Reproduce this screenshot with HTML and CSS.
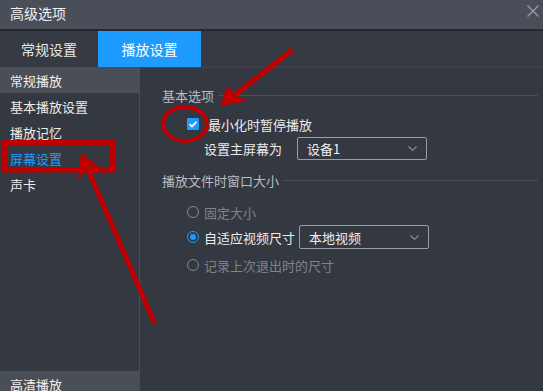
FILE: index.html
```html
<!DOCTYPE html>
<html lang="zh-CN">
<head>
    <meta charset="UTF-8">
    <meta name="viewport" content="width=device-width, initial-scale=1.0">
    <title>高级选项</title>
    <link rel="stylesheet" href="styles.css">
</head>
<body>
    <div class="window">
        <div class="titlebar">
            <span class="title">高级选项</span>
            <svg class="close" width="12" height="12" viewBox="0 0 12 12">
                <path d="M0.5 0.5 L11.5 11.5 M11.5 0.5 L0.5 11.5" stroke="#9a9da3" stroke-width="1.3" fill="none"/>
            </svg>
        </div>

        <div class="tabs">
            <div class="tab">常规设置</div>
            <div class="tab active">播放设置</div>
        </div>

        <div class="main">
            <div class="sidebar">
                <div class="side-head">常规播放</div>
                <div class="side-item">基本播放设置</div>
                <div class="side-item">播放记忆</div>
                <div class="side-item selected">屏幕设置</div>
                <div class="side-item">声卡</div>
                <div class="side-head bottom">高清播放</div>
            </div>

            <div class="content">
                <div class="group-title"><span>基本选项</span><i class="rule"></i></div>

                <div class="row check-row">
                    <span class="checkbox">
                        <svg width="12" height="12" viewBox="0 0 12 12">
                            <path d="M2.6 6.2 L5 8.5 L9.4 3.8" stroke="#fff" stroke-width="1.7" fill="none"/>
                        </svg>
                    </span>
                    <span class="label">最小化时暂停播放</span>
                </div>

                <div class="row select-row">
                    <span class="label">设置主屏幕为</span>
                    <div class="select screen-select">
                        <span>设备1</span>
                        <svg class="chevron" width="9" height="5" viewBox="0 0 9 5">
                            <path d="M0.5 0.5 L4.5 4.3 L8.5 0.5" stroke="#8f9298" stroke-width="1.1" fill="none"/>
                        </svg>
                    </div>
                </div>

                <div class="group-title second"><span>播放文件时窗口大小</span><i class="rule"></i></div>

                <div class="row radio-row first">
                    <span class="radio"></span>
                    <span class="label disabled">固定大小</span>
                </div>
                <div class="row radio-row tall">
                    <span class="radio on"></span>
                    <span class="label">自适应视频尺寸</span>
                    <div class="select video-select">
                        <span>本地视频</span>
                        <svg class="chevron" width="9" height="5" viewBox="0 0 9 5">
                            <path d="M0.5 0.5 L4.5 4.3 L8.5 0.5" stroke="#8f9298" stroke-width="1.1" fill="none"/>
                        </svg>
                    </div>
                </div>
                <div class="row radio-row last">
                    <span class="radio"></span>
                    <span class="label disabled">记录上次退出时的尺寸</span>
                </div>
            </div>
        </div>

        <!-- красные пометки поверх скриншота -->
        <svg class="marks" width="543" height="391" viewBox="0 0 543 391">
            <g stroke="#c00000" fill="none" stroke-linecap="round">
                <line x1="291" y1="51" x2="232" y2="97" stroke-width="5"/>
                <ellipse cx="185" cy="124" rx="22" ry="17" stroke-width="4"/>
                <rect x="4.5" y="142.5" width="108" height="27.5" stroke-width="5" stroke-linecap="butt"/>
                <line x1="154" y1="322" x2="89" y2="172" stroke-width="5"/>
            </g>
            <g fill="#c00000">
                <polygon points="220,106 227,86 235,95 247,101"/>
                <polygon points="81,153 78,180 89,166 102,169"/>
            </g>
        </svg>
    </div>
</body>
</html>
```

FILE: styles.css
```css
* {
    box-sizing: border-box;
}
body {
    margin: 0;
    background: #343840;
    font-family: "Noto Sans CJK SC", "Noto Sans", sans-serif;
    font-size: 13px;
    color: #e8e8e8;
}
.window {
    position: relative;
    width: 543px;
    height: 391px;
    overflow: hidden;
    background: #343840;
}
.titlebar {
    height: 29px;
    background: #4a4e58;
    display: flex;
    align-items: center;
    justify-content: space-between;
    padding: 0 4px 0 10px;
}
.title {
    font-size: 14px;
    color: #f0f0f0;
    line-height: 1;
    margin-top: -3px;
}
.close {
    margin-top: -8px;
}
.tabs {
    height: 38px;
    border-top: 2px solid #26282d;
    background: #363a42;
    display: flex;
}
.tab {
    width: 98px;
    display: flex;
    align-items: center;
    justify-content: center;
    font-size: 14px;
    color: #e8e8e8;
}
.tab.active {
    width: 103px;
    background: #1e9bff;
    color: #fff;
}
.main {
    display: flex;
    height: 330px;
}
.sidebar {
    width: 140px;
    border-right: 1px solid #4a4e56;
    display: flex;
    flex-direction: column;
}
.side-head {
    height: 26px;
    background: #4a4e57;
    padding-left: 10px;
    display: flex;
    align-items: center;
    color: #f0f0f0;
}
.side-head.bottom {
    margin-top: auto;
}
.side-item {
    height: 26px;
    padding-left: 10px;
    display: flex;
    align-items: center;
    color: #ececec;
}
.side-item.selected {
    color: #1e9bff;
}
.content {
    flex: 1;
    border-top: 1px solid #3f434b;
    padding: 17px 5px 0 22px;
}
.group-title {
    height: 20px;
    display: flex;
    align-items: center;
    gap: 4px;
    color: #b9bcc2;
}
.group-title.second {
    margin-top: 10px;
}
.rule {
    flex: 1;
    height: 1px;
    background: #4a4e56;
}
.row {
    display: flex;
    align-items: center;
    height: 20px;
    padding-left: 25px;
}
.check-row {
    margin-top: 9px;
}
.select-row {
    height: 23px;
    margin-top: 3px;
    padding-left: 42px;
}
.radio-row.first {
    margin-top: 12px;
}
.radio-row.tall {
    height: 24px;
    margin-top: 3px;
}
.radio-row.last {
    margin-top: 6px;
}
.checkbox {
    width: 12px;
    height: 12px;
    background: #1e9bff;
    border-radius: 1px;
    display: flex;
    margin-right: 9px;
}
.radio {
    width: 12px;
    height: 12px;
    border: 1px solid #85888f;
    border-radius: 50%;
    margin-right: 5px;
    position: relative;
}
.radio.on {
    border-color: #1e9bff;
}
.radio.on::after {
    content: "";
    position: absolute;
    left: 2px;
    top: 2px;
    width: 6px;
    height: 6px;
    border-radius: 50%;
    background: #1e9bff;
}
.label {
    color: #ececec;
    white-space: nowrap;
}
.label.disabled {
    color: #80838a;
}
.select {
    width: 130px;
    height: 100%;
    border: 1px solid #9a9da3;
    border-radius: 2px;
    display: flex;
    align-items: center;
    justify-content: space-between;
    padding: 0 9px 0 9px;
    color: #f0f0f0;
}
.screen-select {
    margin-left: 15px;
}
.video-select {
    margin-left: 4px;
}
.marks {
    position: absolute;
    left: 0;
    top: 0;
    pointer-events: none;
}
```
